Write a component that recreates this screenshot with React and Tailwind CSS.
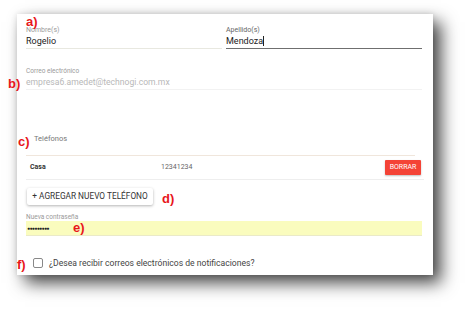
import React from 'react';

const Mark = ({ children, className }) => (
  <span
    className={`absolute text-[13px] leading-none font-bold text-[#e8161b] ${className}`}
    style={{ fontFamily: "'Liberation Sans', Arial, sans-serif" }}
  >
    {children}
  </span>
);

export default function App() {
  return (
    <div
      className="relative w-[472px] h-[312px] overflow-hidden bg-white pl-[17px] pt-[14px]"
      style={{ fontFamily: "Roboto, 'Liberation Sans', sans-serif" }}
    >
      {/* card */}
      <div className="w-[416px] h-[261px] bg-white pl-[9px] pr-[11px] pt-[12px] shadow-[0_0_6px_rgba(0,0,0,0.12),8px_8px_16px_rgba(0,0,0,0.72)]">
        {/* names */}
        <div className="flex gap-[4px]">
          <div className="flex-1">
            <div className="text-[7px] leading-[9px] text-[#9a9a9a]">Nombre(s)</div>
            <div className="text-[9px] leading-[13px] text-[#222] border-b border-[#e8e8e0]">Rogelio</div>
          </div>
          <div className="flex-1">
            <div className="text-[7px] leading-[9px] text-[#666]">Apellido(s)</div>
            <div className="text-[9px] leading-[13px] text-[#222] border-b-[1.5px] border-[#6f6f6f]">
              Mendoza<span className="inline-block w-px h-[10px] bg-[#222] align-[-2px]" />
            </div>
          </div>
        </div>

        {/* email */}
        <div className="mt-[18px]">
          <div className="text-[6.5px] leading-[9px] text-[#9a9a9a]">Correo electrónico</div>
          <div className="text-[8.6px] leading-[13px] text-[#b8b8b8] border-b border-[#f2f2f2]">empresa6.amedet@technogi.com.mx</div>
        </div>

        {/* phones */}
        <div className="mt-[44px] pl-[8px] text-[7.5px] leading-[10px] text-[#777]">Teléfonos</div>
        <div className="mt-[11px] mr-[7px] border-t border-[#f0e6dc]" />
        <div className="flex items-center h-[24px] border-b border-[#eeeeee] -mr-[2px] pl-[4px] pr-[3px]">
          <span className="w-[131px] text-[7px] font-bold text-[#333]">Casa</span>
          <span className="flex-1 text-[7px] text-[#666]">12341234</span>
          <button className="h-[15px] w-[36px] bg-[#f44336] text-white text-[7px] rounded-[1px] shadow-[0_1px_2px_rgba(0,0,0,0.25)]">
            BORRAR
          </button>
        </div>

        <button className="mt-[8px] ml-[1px] h-[17px] w-[126px] bg-white text-[8.3px] text-[#333] rounded-[2px] shadow-[0_1px_3px_rgba(0,0,0,0.3)]">
          + AGREGAR NUEVO TELÉFONO
        </button>

        {/* password */}
        <div className="mt-[7px] text-[6.5px] leading-[8px] text-[#999]">Nueva contraseña</div>
        <div className="h-[15px] bg-[#fafcbe] border-b border-[#eaeac8] flex items-center pl-[1px] text-[5px] tracking-[-0.6px] text-[#222]">
          ●●●●●●●●●
        </div>

        {/* checkbox */}
        <div className="mt-[22px] flex items-center pl-[7px]">
          <span className="w-[10px] h-[10px] rounded-[2px] border-[1.5px] border-[#888]" />
          <span className="ml-[6px] text-[8.6px] leading-none text-[#444]">
            ¿Desea recibir correos electrónicos de notificaciones?
          </span>
        </div>
      </div>

      <Mark className="left-[26px] top-[15px]">a)</Mark>
      <Mark className="left-[8px] top-[77px]">b)</Mark>
      <Mark className="left-[18px] top-[135px]">c)</Mark>
      <Mark className="left-[162px] top-[192px]">d)</Mark>
      <Mark className="left-[73px] top-[221px]">e)</Mark>
      <Mark className="left-[17px] top-[258px]">f)</Mark>
    </div>
  );
}
